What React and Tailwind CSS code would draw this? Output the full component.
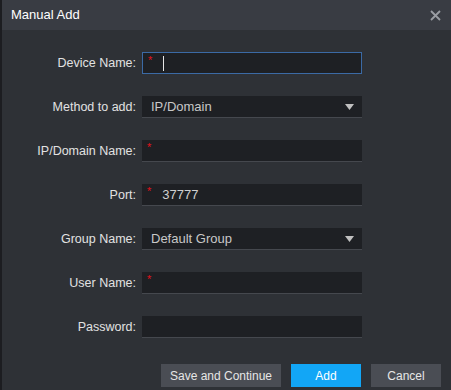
import React from 'react';

function Field({ label, children }) {
  return (
    <div className="flex items-center h-[22px]">
      <label className="w-[134px] text-right text-[12.5px] text-[#e2e2e2]">{label}</label>
      <div className="ml-[6px] w-[220px] h-full">{children}</div>
    </div>
  );
}

function Star() {
  return <span className="text-[#e4111b] text-[11px] leading-none mt-[-6px] ml-[5px]">*</span>;
}

function TextBox({ required, value, focused, cursor }) {
  return (
    <div
      className={`flex items-center h-full bg-[#1e2024] ${
        focused ? 'border border-[#3b6aa5]' : 'border-b border-[#45484e]'
      }`}
    >
      {required && <Star />}
      {cursor && <span className="ml-[11px] w-[1px] h-[15px] bg-[#e6e6e6]" />}
      {value && <span className="ml-[11px] text-[13px] text-[#d0d0d0]">{value}</span>}
    </div>
  );
}

function Select({ value }) {
  return (
    <div className="flex items-center justify-between h-full bg-[#1e2024] border-b border-[#45484e] pl-[9px] pr-[8px]">
      <span className="text-[13px] text-[#c8c8c8]">{value}</span>
      <svg width="9" height="6" viewBox="0 0 9 6">
        <path d="M0 0 L9 0 L4.5 6 Z" fill="#c0c0c0" />
      </svg>
    </div>
  );
}

export default function App() {
  return (
    <div
      className="w-[451px] h-[390px] bg-[#2e3136] border-l-2 border-[#1c1d21] flex flex-col overflow-hidden"
      style={{ fontFamily: '"Liberation Sans", Arial, sans-serif' }}
    >
      <div className="h-[30px] bg-[#393c43] flex items-center justify-between pl-[9px] pr-[10px] shrink-0">
        <span className="text-[13px] text-white">Manual Add</span>
        <svg width="11" height="11" viewBox="0 0 11 11">
          <path d="M1 1 L10 10 M10 1 L1 10" stroke="#9a9da3" strokeWidth="1.8" />
        </svg>
      </div>

      <div className="flex flex-col gap-[22px] pt-[22px]">
        <Field label="Device Name:">
          <TextBox required focused cursor />
        </Field>
        <Field label="Method to add:">
          <Select value="IP/Domain" />
        </Field>
        <Field label="IP/Domain Name:">
          <TextBox required />
        </Field>
        <Field label="Port:">
          <TextBox required value="37777" />
        </Field>
        <Field label="Group Name:">
          <Select value="Default Group" />
        </Field>
        <Field label="User Name:">
          <TextBox required />
        </Field>
        <Field label="Password:">
          <TextBox />
        </Field>
      </div>

      <div className="flex mt-[26px] pl-[159px] gap-[10px]">
        <button className="w-[120px] h-[23px] bg-[#4a4d54] text-[12px] text-[#e6e6e6]">Save and Continue</button>
        <button className="w-[70px] h-[23px] bg-[#12a6f6] text-[12px] text-white">Add</button>
        <button className="w-[70px] h-[23px] bg-[#4a4d54] text-[12px] text-[#e6e6e6]">Cancel</button>
      </div>
    </div>
  );
}
